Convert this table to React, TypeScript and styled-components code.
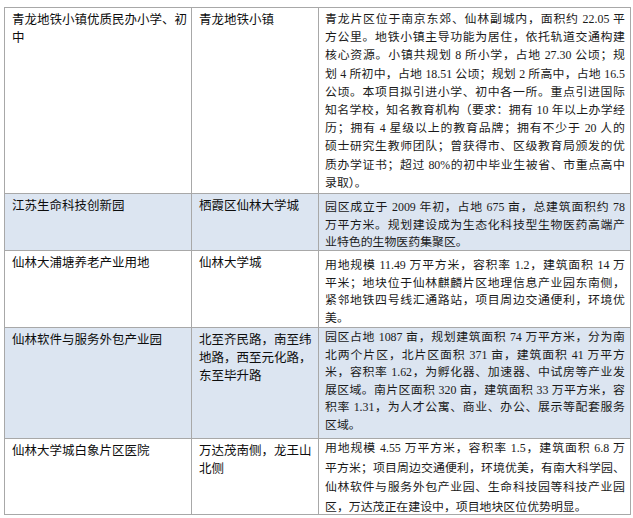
import React from 'react';
import styled, { createGlobalStyle } from 'styled-components';

type Row = {
  name: string[];
  place: string[];
  desc: string[];
  blue?: boolean;
  lh: number;
  pad: number;
};

const rows: Row[] = [
  {
    name: ['青龙地铁小镇优质民办小学、初', '中'],
    place: ['青龙地铁小镇'],
    desc: [
      '青龙片区位于南京东郊、仙林副城内，面积约 22.05 平',
      '方公里。地铁小镇主导功能为居住，依托轨道交通构建',
      '核心资源。小镇共规划 8 所小学，占地 27.30 公顷；规',
      '划 4 所初中，占地 18.51 公顷；规划 2 所高中，占地 16.5',
      '公顷。本项目拟引进小学、初中各一所。重点引进国际',
      '知名学校，知名教育机构（要求：拥有 10 年以上办学经',
      '历；拥有 4 星级以上的教育品牌；拥有不少于 20 人的',
      '硕士研究生教师团队；曾获得市、区级教育局颁发的优',
      '质办学证书；超过 80%的初中毕业生被省、市重点高中',
      '录取）。',
    ],
    lh: 18.2,
    pad: 2,
  },
  {
    name: ['江苏生命科技创新园'],
    place: ['栖霞区仙林大学城'],
    desc: [
      '园区成立于 2009 年初，占地 675 亩，总建筑面积约 78',
      '万平方米。规划建设成为生态化科技型生物医药高端产',
      '业特色的生物医药集聚区。',
    ],
    blue: true,
    lh: 17.5,
    pad: 5,
  },
  {
    name: ['仙林大浦塘养老产业用地'],
    place: ['仙林大学城'],
    desc: [
      '用地规模 11.49 万平方米，容积率 1.2，建筑面积 14 万',
      '平米；地块位于仙林麒麟片区地理信息产业园东南侧，',
      '紧邻地铁四号线汇通路站，项目周边交通便利，环境优',
      '美。',
    ],
    lh: 17.7,
    pad: 6,
  },
  {
    name: ['仙林软件与服务外包产业园'],
    place: ['北至齐民路，南至纬', '地路，西至元化路，', '东至毕升路'],
    desc: [
      '园区占地 1087 亩，规划建筑面积 74 万平方米，分为南',
      '北两个片区，北片区面积 371 亩，建筑面积 41 万平方',
      '米，容积率 1.62，为孵化器、加速器、中试房等产业发',
      '展区域。南片区面积 320 亩，建筑面积 33 万平方米，容',
      '积率 1.31，为人才公寓、商业、办公、展示等配套服务',
      '区域。',
    ],
    blue: true,
    lh: 17.6,
    pad: 1,
  },
  {
    name: ['仙林大学城白象片区医院'],
    place: ['万达茂南侧，龙王山', '北侧'],
    desc: [
      '用地规模 4.55 万平方米，容积率 1.5，建筑面积 6.8 万',
      '平方米；项目周边交通便利，环境优美，有南大科学园、',
      '仙林软件与服务外包产业园、生命科技园等科技产业园',
      '区，万达茂正在建设中，项目地块区位优势明显。',
    ],
    lh: 19.6,
    pad: 0,
  },
];

const GlobalStyle = createGlobalStyle`
  html, body {
    margin: 0;
    padding: 0;
    background: #ffffff;
  }
`;

const Page = styled.div`
  padding: 7px 0 0 4px;
`;

const Table = styled.div`
  display: grid;
  grid-template-columns: 186px 126px 311px;
  grid-template-rows: 185px 56px 76px 110px 75px;
  gap: 1px;
  padding: 1px;
  width: max-content;
  background: #a8a8a8;
`;

const Cell = styled.div<{ $blue?: boolean }>`
  background: ${(p) => (p.$blue ? '#dce5f1' : '#ffffff')};
  padding: 2px 0 0 7px;
  font-family: 'Noto Sans CJK SC', sans-serif;
  font-size: 12.5px;
  line-height: 18px;
  color: #0d0d0d;
  overflow: hidden;
  white-space: nowrap;
`;

const DescCell = styled(Cell)<{ $lh: number; $pad: number }>`
  padding: ${(p) => p.$pad}px 5px 0 6px;
  font-family: 'Liberation Serif', 'Noto Sans CJK SC', serif;
  font-size: 11.9px;
  line-height: ${(p) => p.$lh}px;
  color: #1a1a1a;
  white-space: normal;
  overflow: visible;
`;

const Line = styled.span<{ $fill?: boolean }>`
  display: block;
  text-align: ${(p) => (p.$fill ? 'justify' : 'left')};
  text-align-last: ${(p) => (p.$fill ? 'justify' : 'left')};
`;

export default function App() {
  return (
    <>
      <GlobalStyle />
      <Page>
        <Table>
          {rows.map((r, i) => (
            <React.Fragment key={i}>
              <Cell $blue={r.blue}>
                {r.name.map((t, j) => (
                  <Line key={j}>{t}</Line>
                ))}
              </Cell>
              <Cell $blue={r.blue}>
                {r.place.map((t, j) => (
                  <Line key={j}>{t}</Line>
                ))}
              </Cell>
              <DescCell $blue={r.blue} $lh={r.lh} $pad={r.pad}>
                {r.desc.map((t, j) => (
                  <Line key={j} $fill={j < r.desc.length - 1}>
                    {t}
                  </Line>
                ))}
              </DescCell>
            </React.Fragment>
          ))}
        </Table>
      </Page>
    </>
  );
}
